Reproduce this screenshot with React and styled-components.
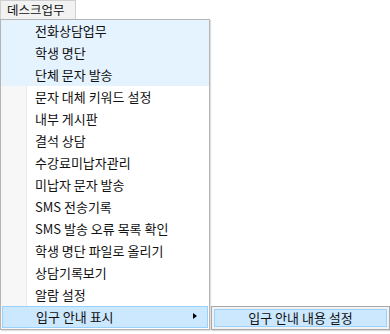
import styled, { createGlobalStyle } from "styled-components";

const GlobalStyle = createGlobalStyle`
  body {
    margin: 0;
    background: #ffffff;
    font-family: "Noto Sans CJK KR", "Noto Sans", sans-serif;
  }
`;

const Wrapper = styled.div`
  position: relative;
  width: 390px;
  height: 334px;
  background: #ffffff;
`;

const MenuTab = styled.div`
  box-sizing: border-box;
  width: 76px;
  height: 19px;
  padding-left: 6px;
  font-size: 12.5px;
  line-height: 18px;
  color: #111111;
  background: #f2f2f2;
  border: 1px solid #cfcfcf;
  border-bottom: 0;
`;

const Panel = styled.div`
  position: relative;
  box-sizing: border-box;
  width: 210px;
  border: 1px solid #b4b4b4;
  box-shadow: 1px 1px 1px rgba(0, 0, 0, 0.12);
  padding: 0 0 1px;
  background: linear-gradient(
    to right,
    #f7f7f7 0,
    #f7f7f7 25px,
    #ececec 25px,
    #ececec 26px,
    #ffffff 26px
  );
`;

const Row = styled.div`
  position: relative;
  box-sizing: border-box;
  height: 22px;
  margin: ${(p) => (p.$active ? "0 1px" : "0")};
  padding-left: ${(p) => (p.$active ? "33px" : "34px")};
  font-size: 13px;
  line-height: ${(p) => (p.$active ? "20px" : "22px")};
  color: #111111;
  white-space: nowrap;
  background: ${(p) =>
    p.$active ? "#cce8ff" : p.$tint ? "#e5f3ff" : "transparent"};
  border: ${(p) => (p.$active ? "1px solid #99d1ff" : "0")};
`;

const Arrow = styled.span`
  position: absolute;
  right: 10px;
  top: 6px;
  width: 0;
  height: 0;
  border-top: 3.5px solid transparent;
  border-bottom: 3.5px solid transparent;
  border-left: 4px solid #000000;
`;

const SubMenu = styled.div`
  position: absolute;
  left: 208px;
  top: -1px;
  box-sizing: border-box;
  width: 179px;
  height: 24px;
  padding: 2px;
  background: #f2f2f2;
  border: 1px solid #a8a8a8;
  box-shadow: 1px 1px 1px rgba(0, 0, 0, 0.15);
`;

const SubItem = styled.div`
  box-sizing: border-box;
  height: 18px;
  font-size: 13px;
  line-height: 16px;
  text-align: center;
  color: #111111;
  background: #cce8ff;
  border: 1px solid #99d1ff;
`;

const items = [
  "전화상담업무",
  "학생 명단",
  "단체 문자 발송",
  "문자 대체 키워드 설정",
  "내부 게시판",
  "결석 상담",
  "수강료미납자관리",
  "미납자 문자 발송",
  "SMS 전송기록",
  "SMS 발송 오류 목록 확인",
  "학생 명단 파일로 올리기",
  "상담기록보기",
  "알람 설정",
];

export default function App() {
  return (
    <Wrapper>
      <GlobalStyle />
      <MenuTab>데스크업무</MenuTab>
      <Panel>
        {items.map((label, i) => (
          <Row key={label} $tint={i < 3}>
            {label}
          </Row>
        ))}
        <Row $active>
          입구 안내 표시
          <Arrow />
          <SubMenu>
            <SubItem>입구 안내 내용 설정</SubItem>
          </SubMenu>
        </Row>
      </Panel>
    </Wrapper>
  );
}
